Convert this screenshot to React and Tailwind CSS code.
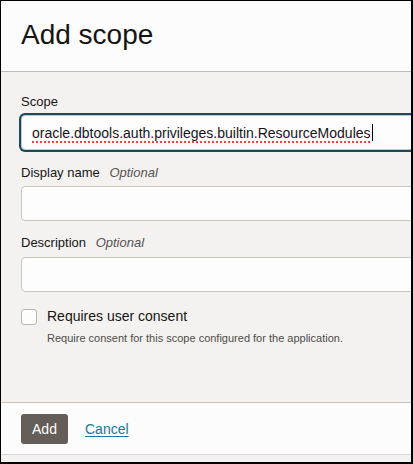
export default function App() {
  return (
    <div
      className="w-[413px] h-[464px] overflow-hidden border-t border-l border-r-2 border-b-2 border-black bg-[#f3f2f0] text-[#161513] flex flex-col"
      style={{ fontFamily: '"Liberation Sans", Arial, sans-serif' }}
    >
      <div className="h-[71px] shrink-0 bg-[#fcfcfc] border-b border-[#bdb9b5] pl-5 pt-[17px]">
        <h1 className="text-[28px] leading-[34px] font-normal">Add scope</h1>
      </div>

      <div className="h-[330px] shrink-0 pl-5 pt-[22px] flex flex-col">
        <label className="text-[13px] leading-4">Scope</label>
        <div className="mt-[5px] w-[430px] h-[35px] shrink-0 rounded-[4px] border border-[#c9c6c2] bg-[#fdfdfd] ring-2 ring-[#1b4b5f] flex items-center pl-[10px]">
          <span className="text-[14px] leading-4 underline decoration-dotted decoration-[#ef4444] decoration-[1.5px] underline-offset-[4px]">
            oracle.dbtools.auth.privileges.builtin.ResourceModules
          </span>
          <span className="w-px h-[17px] bg-black ml-px"></span>
        </div>

        <label className="mt-[15px] text-[13px] leading-4">
          Display name <span className="ml-[6px] italic text-[#555250]">Optional</span>
        </label>
        <div className="mt-[5px] w-[430px] h-[35px] shrink-0 rounded-[4px] border border-[#c9c6c2] bg-[#fdfdfd]"></div>

        <label className="mt-[14px] text-[13px] leading-4">
          Description <span className="ml-[6px] italic text-[#555250]">Optional</span>
        </label>
        <div className="mt-[6px] w-[430px] h-[35px] shrink-0 rounded-[4px] border border-[#c9c6c2] bg-[#fdfdfd]"></div>

        <div className="mt-[16px] flex items-start gap-[10px]">
          <div className="mt-px w-4 h-4 shrink-0 rounded-[3px] border border-[#b9b5b1] bg-[#fdfdfd]"></div>
          <div className="flex flex-col">
            <span className="text-[14px] leading-4">Requires user consent</span>
            <span className="mt-[7px] text-[11px] leading-[14px] text-[#4f4c49]">
              Require consent for this scope configured for the application.
            </span>
          </div>
        </div>
      </div>

      <div className="h-[53px] shrink-0 bg-[#fcfcfc] border-t border-b border-t-[#c6c1bc] border-b-[#d9d7d4] pl-5 flex items-center">
        <button className="h-[30px] w-[47px] rounded-[3px] bg-[#645d58] text-white text-[14px] leading-4">
          Add
        </button>
        <a href="#" className="ml-[17px] text-[14px] leading-4 text-[#19789b] underline underline-offset-2">
          Cancel
        </a>
      </div>
    </div>
  );
}
